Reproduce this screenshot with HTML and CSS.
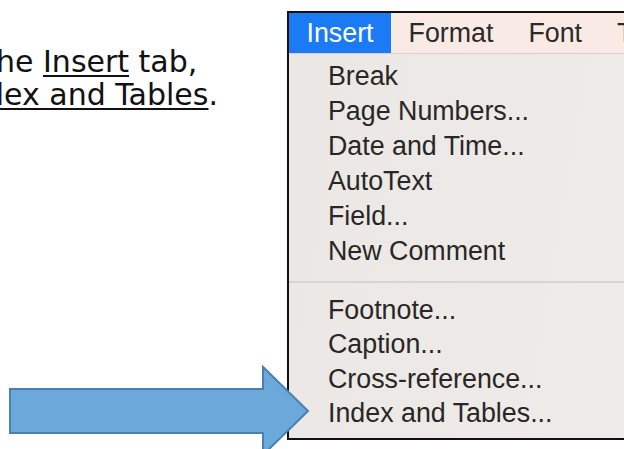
FILE: index.html
```html
<!DOCTYPE html>
<html lang="en">
<head>
<meta charset="utf-8">
<title>Insert menu</title>
<link rel="stylesheet" href="styles.css">
</head>
<body>
  <div class="page">
    <div class="instructions">
      <p class="line first">he <u>Insert</u> tab,</p>
      <p class="line second"><u>dex and Tables</u>.</p>
    </div>

    <div class="menu">
      <div class="menubar">
        <span class="menubar-item active">Insert</span>
        <span class="menubar-item">Format</span>
        <span class="menubar-item">Font</span>
        <span class="menubar-item">Tools</span>
      </div>
      <ul class="menu-group">
        <li class="menu-item">Break<svg class="submenu" viewBox="0 0 16 17" width="16" height="17"><polygon points="0,0 16,8.5 0,17"/></svg></li>
        <li class="menu-item">Page Numbers...</li>
        <li class="menu-item">Date and Time...</li>
        <li class="menu-item">AutoText<svg class="submenu" viewBox="0 0 16 17" width="16" height="17"><polygon points="0,0 16,8.5 0,17"/></svg></li>
        <li class="menu-item">Field...</li>
        <li class="menu-item">New Comment</li>
      </ul>
      <hr class="separator">
      <ul class="menu-group lower">
        <li class="menu-item">Footnote...</li>
        <li class="menu-item">Caption...</li>
        <li class="menu-item">Cross-reference...</li>
        <li class="menu-item">Index and Tables...</li>
      </ul>
    </div>

    <!-- callout arrow pointing at the last menu entry -->
    <svg class="callout" viewBox="0 0 320 100" width="320" height="100">
      <polygon points="10,29 263,29 263,7 308,51 263,95 263,73 10,73"/>
    </svg>
  </div>
</body>
</html>
```

FILE: styles.css
```css
html, body {
  margin: 0;
  padding: 0;
  background: #ffffff;
  overflow: hidden;
}

.page {
  position: relative;
  display: flex;
  width: 624px;
  height: 449px;
  overflow: hidden;
}

/* left-hand instruction text, cut by the page edge */
.instructions {
  flex: 0 0 287px;
  padding-top: 45px;
  font-family: "DejaVu Sans", Verdana, sans-serif;
  font-size: 30px;
  line-height: 33px;
  color: #111111;
}

.line {
  margin: 0;
  white-space: nowrap;
}

.line.first {
  margin-left: -4px;
}

.line.second {
  margin-left: -15px;
}

.line u {
  text-decoration-thickness: 2px;
  text-underline-offset: 3px;
}

/* the dropdown menu */
.menu {
  flex: 0 0 340px;
  box-sizing: border-box;
  margin-top: 11px;
  height: 429px;
  border: 2px solid #111111;
  border-right: none;
  background: linear-gradient(100deg, #ebe7e4 0%, #eeeae7 60%, #f0ece9 100%);
  font-family: "Liberation Sans", Arial, sans-serif;
  font-size: 26.8px;
  color: #282726;
}

.menubar {
  display: flex;
  height: 40px;
  line-height: 40px;
  background: #faeae5;
  border-bottom: 1px solid #d9d1cd;
}

.menubar-item {
  padding: 0 17.5px;
  white-space: nowrap;
  color: #2b2a29;
}

.menubar-item.active {
  background: #1a7bf4;
  color: #ffffff;
}

.menu-group {
  list-style: none;
  margin: 0;
  padding: 5px 0 0 0;
}

.menu-group.lower {
  padding-top: 10px;
}

.menu-item {
  display: flex;
  align-items: center;
  justify-content: space-between;
  height: 35px;
  line-height: 35px;
  padding: 0 25px 0 39px;
  white-space: nowrap;
}

.lower .menu-item {
  height: 34.4px;
  line-height: 34.4px;
}

.submenu {
  fill: #333231;
}

.separator {
  margin: 12px 0 0 0;
  border: none;
  height: 2px;
  background: #d8d4d1;
}

/* blue block arrow drawn over the page */
.callout {
  position: absolute;
  left: 0;
  top: 360px;
  overflow: visible;
}

.callout polygon {
  fill: #6aa9da;
  stroke: #4b7fb2;
  stroke-width: 2;
  stroke-linejoin: miter;
}
```
